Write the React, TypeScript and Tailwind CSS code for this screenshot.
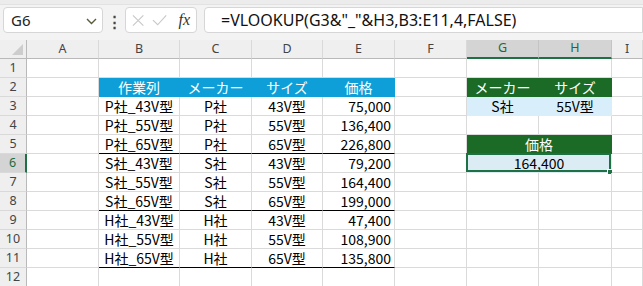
import React from 'react';

type Fill = 'none' | 'blue' | 'green' | 'light' | 'sel';

interface CellDef {
  text?: string;
  align?: 'left' | 'center' | 'right';
  fill?: Fill;
  thick?: boolean; // black bottom border
  span?: number;
  selected?: boolean;
}

const COLS = ['A', 'B', 'C', 'D', 'E', 'F', 'G', 'H', 'I'];

const data: [string, string, string, string][] = [
  ['P社_43V型', 'P社', '43V型', '75,000'],
  ['P社_55V型', 'P社', '55V型', '136,400'],
  ['P社_65V型', 'P社', '65V型', '226,800'],
  ['S社_43V型', 'S社', '43V型', '79,200'],
  ['S社_55V型', 'S社', '55V型', '164,400'],
  ['S社_65V型', 'S社', '65V型', '199,000'],
  ['H社_43V型', 'H社', '43V型', '47,400'],
  ['H社_55V型', 'H社', '55V型', '108,900'],
  ['H社_65V型', 'H社', '65V型', '135,800'],
];

function buildRow(r: number): CellDef[] {
  const blank = (): CellDef => ({});
  if (r === 2) {
    return [
      blank(),
      { text: '作業列', align: 'center', fill: 'blue' },
      { text: 'メーカー', align: 'center', fill: 'blue' },
      { text: 'サイズ', align: 'center', fill: 'blue' },
      { text: '価格', align: 'center', fill: 'blue' },
      blank(),
      { text: 'メーカー', align: 'center', fill: 'green' },
      { text: 'サイズ', align: 'center', fill: 'green' },
      blank(),
    ];
  }
  if (r >= 3 && r <= 11) {
    const d = data[r - 3];
    const thick = r === 5 || r === 8 || r === 11;
    const row: CellDef[] = [
      blank(),
      { text: d[0], align: 'center', thick },
      { text: d[1], align: 'center', thick },
      { text: d[2], align: 'center', thick },
      { text: d[3], align: 'right', thick },
      blank(),
    ];
    if (r === 3) {
      row.push({ text: 'S社', align: 'center', fill: 'light' }, { text: '55V型', align: 'center', fill: 'light' });
    } else if (r === 5) {
      row.push({ text: '価格', align: 'center', fill: 'green', span: 2 });
    } else if (r === 6) {
      row.push({ text: '164,400', align: 'center', fill: 'sel', span: 2, selected: true });
    } else {
      row.push(blank(), blank());
    }
    row.push(blank());
    return row;
  }
  return COLS.map(() => blank());
}

function fillClass(c: CellDef) {
  switch (c.fill) {
    case 'blue':
      return 'bg-[#0e9fd8] text-white border-r-[#0e9fd8] border-b-[#0e9fd8]';
    case 'green':
      return 'bg-[#1b6b26] text-white border-r-[#1b6b26] border-b-[#1b6b26]';
    case 'light':
      return 'bg-[#d8effb] text-black border-r-[#d8effb] border-b-[#d8effb]';
    case 'sel':
      return 'bg-[#dbecf4] text-black border-r-[#dbecf4] border-b-[#dbecf4]';
    default:
      return c.thick
        ? 'text-black border-r-[#dadada] border-b-black'
        : 'text-black border-r-[#dadada] border-b-[#dadada]';
  }
}

function alignClass(a?: string) {
  if (a === 'center') return 'justify-center';
  if (a === 'right') return 'justify-end pr-[3px]';
  return 'justify-start pl-1';
}

function Cell({ c }: { c: CellDef }) {
  return (
    <div
      className={`relative flex items-center h-[19px] border-r border-b whitespace-nowrap overflow-visible text-[14px] ${fillClass(c)} ${alignClass(c.align)} ${c.span === 2 ? 'col-span-2' : ''}`}
    >
      {c.text}
      {c.selected && (
        <>
          <div className="absolute -top-px -left-px right-0 bottom-0 border-2 border-[#1e7145]" />
          <div className="absolute -right-[2px] -bottom-[3px] w-[6px] h-[6px] bg-[#1e7145] border border-white" />
        </>
      )}
    </div>
  );
}

function FormulaBar() {
  return (
    <div className="bg-[#f3f3f3] h-[40px] relative">
      <div className="h-[5px] bg-[#ececec] border-b border-[#e2e2e2]" />
      <div className="flex items-center mt-[2px] h-[26px]">
        <div className="ml-[3px] w-[100px] h-[26px] bg-white border border-[#d6d6d6] rounded-[4px] flex items-center justify-between pl-[7px] pr-[5px]">
          <span className="text-[15px] text-[#222] font-['Noto_Sans',sans-serif]">G6</span>
          <svg width="11" height="7" viewBox="0 0 11 7" className="mt-[2px]">
            <path d="M1 1 L5.5 5.5 L10 1" fill="none" stroke="#5a5a3c" strokeWidth="1.4" />
          </svg>
        </div>
        <div className="w-[22px] flex justify-center text-[#444] text-[15px] font-bold leading-none">⋮</div>
        <div className="w-[72px] h-[26px] bg-white border border-[#d6d6d6] rounded-[4px] flex items-center px-[6px] gap-[8px]">
          <svg width="13" height="13" viewBox="0 0 13 13">
            <path d="M1 1 L12 12 M12 1 L1 12" stroke="#c8c8c8" strokeWidth="1.2" />
          </svg>
          <svg width="16" height="13" viewBox="0 0 16 13">
            <path d="M1 6 L6 11 L15 1" fill="none" stroke="#c8c8c8" strokeWidth="1.2" />
          </svg>
          <span className="ml-[3px] text-[16px] italic text-[#333] font-['Liberation_Serif',serif] leading-none">fx</span>
        </div>
        <div className="ml-[7px] flex-1 h-[26px] bg-white border border-[#d6d6d6] rounded-l-[4px] flex items-center pl-[16px]">
          <span className="text-[16px] text-[#111] font-['Noto_Sans',sans-serif] whitespace-nowrap">
            =VLOOKUP(G3&amp;"_"&amp;H3,B3:E11,4,FALSE)
          </span>
        </div>
      </div>
    </div>
  );
}

export default function App() {
  const rows = Array.from({ length: 12 }, (_, i) => i + 1);
  return (
    <div className="w-[643px] h-[286px] overflow-hidden bg-white font-['Noto_Sans_CJK_JP',sans-serif]">
      <FormulaBar />
      <div className="grid grid-cols-[27px_72px_81px_72px_71px_72px_72px_72px_73px_1fr]">
        {/* column headers */}
        <div className="relative h-[19px] bg-[#efefef] border-r border-b border-[#b9b9b9]">
          <div className="absolute right-[3px] bottom-[3px] w-0 h-0 border-l-[11px] border-l-transparent border-b-[11px] border-b-[#cdcdcd]" />
        </div>
        {COLS.map((col) => {
          const hi = col === 'G' || col === 'H';
          return (
            <div
              key={col}
              className={`h-[19px] flex items-center justify-center text-[12.5px] font-['Noto_Sans',sans-serif] border-r ${
                hi
                  ? 'bg-[#d4d4d4] text-[#1d6b3a] border-r-[#c4c4c4] border-b-2 border-b-[#1e7145]'
                  : 'bg-[#efefef] text-[#444] border-r-[#d9d9d9] border-b border-b-[#b9b9b9]'
              }`}
            >
              {col}
            </div>
          );
        })}
        {rows.map((r) => {
          const cells = buildRow(r);
          return (
            <React.Fragment key={r}>
              <div
                className={`h-[19px] flex items-center justify-center text-[12.5px] font-['Noto_Sans',sans-serif] border-b border-b-[#d9d9d9] ${
                  r === 6
                    ? 'bg-[#d4d4d4] text-[#1d6b3a] border-r-2 border-r-[#1e7145]'
                    : 'bg-[#efefef] text-[#444] border-r border-r-[#b9b9b9]'
                }`}
              >
                {r}
              </div>
              {cells.map((c, i) => (
                <Cell key={i} c={c} />
              ))}
            </React.Fragment>
          );
        })}
      </div>
    </div>
  );
}
